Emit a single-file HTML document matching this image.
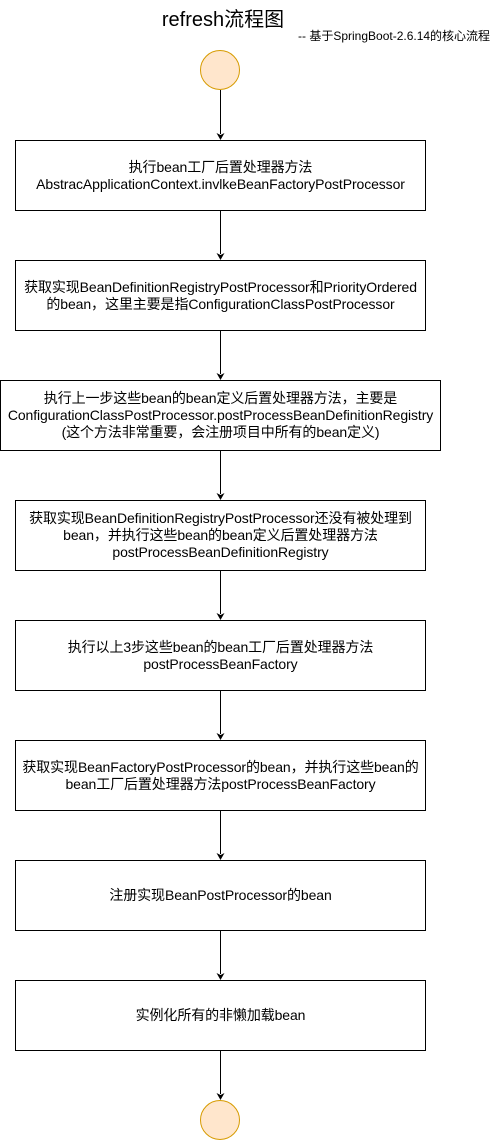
<!DOCTYPE html>
<html><head><meta charset="utf-8"><style>
body{margin:0;width:495px;height:1140px;background:#fff;position:relative;overflow:hidden;font-family:"Liberation Sans","Noto Sans CJK SC",sans-serif;color:#000}
.b{position:absolute;box-sizing:border-box;border:1px solid #000;background:#fff;display:flex;align-items:center;justify-content:center;text-align:center;font-size:14px;line-height:17px;white-space:nowrap;letter-spacing:-0.1px}
.c{position:absolute;width:40px;height:40px;border-radius:50%;background:#ffe6cc;border:1px solid #d79b00;box-sizing:border-box;left:200px}
</style></head><body>
<div style="position:absolute;left:0;width:446px;top:3px;text-align:center;font-size:20px">refresh流程图</div>
<div style="position:absolute;left:298px;top:27px;font-size:12px">-- 基于SpringBoot-2.6.14的核心流程</div>
<svg width="495" height="1140" style="position:absolute;left:0;top:0">
<g stroke="#000" stroke-width="1">
<line x1="220.5" y1="90" x2="220.5" y2="134"/>
<line x1="220.5" y1="210" x2="220.5" y2="254"/>
<line x1="220.5" y1="330" x2="220.5" y2="374"/>
<line x1="220.5" y1="450" x2="220.5" y2="494"/>
<line x1="220.5" y1="570" x2="220.5" y2="614"/>
<line x1="220.5" y1="690" x2="220.5" y2="734"/>
<line x1="220.5" y1="810" x2="220.5" y2="854"/>
<line x1="220.5" y1="930" x2="220.5" y2="974"/>
<line x1="220.5" y1="1050" x2="220.5" y2="1094"/>
</g>
<g fill="#000">
<path d="M216.5 133 L220.5 140 L224.5 133 L220.5 135Z"/>
<path d="M216.5 253 L220.5 260 L224.5 253 L220.5 255Z"/>
<path d="M216.5 373 L220.5 380 L224.5 373 L220.5 375Z"/>
<path d="M216.5 493 L220.5 500 L224.5 493 L220.5 495Z"/>
<path d="M216.5 613 L220.5 620 L224.5 613 L220.5 615Z"/>
<path d="M216.5 733 L220.5 740 L224.5 733 L220.5 735Z"/>
<path d="M216.5 853 L220.5 860 L224.5 853 L220.5 855Z"/>
<path d="M216.5 973 L220.5 980 L224.5 973 L220.5 975Z"/>
<path d="M216.5 1093 L220.5 1100 L224.5 1093 L220.5 1095Z"/>
</g></svg>
<div class="c" style="top:50px"></div>
<div class="b" style="left:15px;top:140px;width:411px;height:71px">执行bean工厂后置处理器方法<br>AbstracApplicationContext.invlkeBeanFactoryPostProcessor</div>
<div class="b" style="left:15px;top:260px;width:411px;height:71px">获取实现BeanDefinitionRegistryPostProcessor和PriorityOrdered<br>的bean，这里主要是指ConfigurationClassPostProcessor</div>
<div class="b" style="left:0px;top:380px;width:441px;height:71px">执行上一步这些bean的bean定义后置处理器方法，主要是<br>ConfigurationClassPostProcessor.postProcessBeanDefinitionRegistry<br>(这个方法非常重要，会注册项目中所有的bean定义)</div>
<div class="b" style="left:15px;top:500px;width:411px;height:71px">获取实现BeanDefinitionRegistryPostProcessor还没有被处理到<br>bean，并执行这些bean的bean定义后置处理器方法<br>postProcessBeanDefinitionRegistry</div>
<div class="b" style="left:15px;top:620px;width:411px;height:71px">执行以上3步这些bean的bean工厂后置处理器方法<br>postProcessBeanFactory</div>
<div class="b" style="left:15px;top:740px;width:411px;height:71px">获取实现BeanFactoryPostProcessor的bean，并执行这些bean的<br>bean工厂后置处理器方法postProcessBeanFactory</div>
<div class="b" style="left:15px;top:860px;width:411px;height:71px">注册实现BeanPostProcessor的bean</div>
<div class="b" style="left:15px;top:980px;width:411px;height:71px">实例化所有的非懒加载bean</div>
<div class="c" style="top:1100px"></div>
</body></html>
